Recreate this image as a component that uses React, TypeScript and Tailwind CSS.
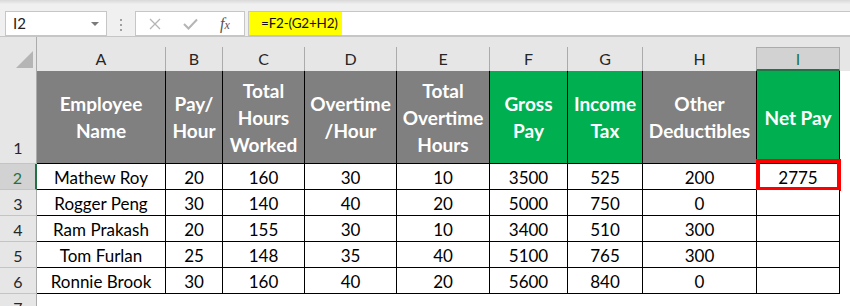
import React from "react";

const COLS = ["A", "B", "C", "D", "E", "F", "G", "H", "I"];
const WIDTHS = [129, 57, 82, 92, 93, 78, 75, 114, 83];

const HEAD: { t: string; g: boolean }[] = [
  { t: "Employee\nName", g: false },
  { t: "Pay/\nHour", g: false },
  { t: "Total\nHours\nWorked", g: false },
  { t: "Overtime\n/Hour", g: false },
  { t: "Total\nOvertime\nHours", g: false },
  { t: "Gross\nPay", g: true },
  { t: "Income\nTax", g: true },
  { t: "Other\nDeductibles", g: false },
  { t: "Net Pay", g: true },
];

const DATA: string[][] = [
  ["Mathew Roy", "20", "160", "30", "10", "3500", "525", "200", "2775"],
  ["Rogger Peng", "30", "140", "40", "20", "5000", "750", "0", ""],
  ["Ram Prakash", "20", "155", "30", "10", "3400", "510", "300", ""],
  ["Tom Furlan", "25", "148", "35", "40", "5100", "765", "300", ""],
  ["Ronnie Brook", "30", "160", "40", "20", "5600", "840", "0", ""],
];

const font = { fontFamily: "Lato, 'Open Sans', sans-serif" };

export default function App() {
  return (
    <div className="w-[850px] h-[306px] overflow-hidden bg-white" style={font}>
      {/* Formula bar */}
      <div className="h-[36px] bg-gradient-to-b from-[#d9d9d9] via-[#f0f0f0] via-[12%] to-[#f0f0f0] flex items-start pt-[11px]">
        <div className="ml-[5px] w-[102px] h-[25px] bg-white border border-[#c6c6c6] flex items-center pl-[7px] pr-[7px] justify-between">
          <span className="text-[15px] text-[#222]">I2</span>
          <span className="w-0 h-0 border-l-[4px] border-r-[4px] border-t-[4px] border-l-transparent border-r-transparent border-t-[#7a7a7a]" />
        </div>
        <div className="ml-[13px] mt-[8px] flex flex-col gap-[3px]">
          <span className="w-[2px] h-[2px] bg-[#a0a0a0]" />
          <span className="w-[2px] h-[2px] bg-[#a0a0a0]" />
          <span className="w-[2px] h-[2px] bg-[#a0a0a0]" />
        </div>
        <div className="ml-[13px] w-[110px] h-[25px] bg-white border border-[#c6c6c6] flex items-center">
          <svg width="12" height="12" viewBox="0 0 12 12" className="ml-[13px]">
            <path d="M1 1 L11 11 M11 1 L1 11" stroke="#b5b5b5" strokeWidth="1.3" fill="none" />
          </svg>
          <svg width="15" height="12" viewBox="0 0 15 12" className="ml-[22px]">
            <path d="M1 6 L5.5 10.5 L14 1.5" stroke="#b5b5b5" strokeWidth="2" fill="none" />
          </svg>
          <span className="ml-[22px] italic text-[#555] text-[16px] leading-none" style={{ fontFamily: "'Liberation Serif', serif" }}>
            f<span className="text-[12px]">x</span>
          </span>
        </div>
        <div className="ml-[3px] flex-1 h-[25px] bg-white border border-[#c6c6c6] border-r-0 flex items-stretch">
          <div className="w-[93px] bg-[#ffff00] flex items-center pl-[12px] text-[13.5px] tracking-[-0.2px] text-[#111] whitespace-nowrap">=F2-(G2+H2)</div>
        </div>
      </div>

      {/* Sheet grid */}
      <div className="bg-[#e6e6e6] border-t border-[#c6c6c6]">
        {/* Column header row */}
        <div className="flex h-[34px]">
          <div className="w-[37px] shrink-0 border-r border-[#ababab] relative">
            <svg width="18" height="17" viewBox="0 0 18 17" className="absolute left-[16px] top-[14px]">
              <path d="M17 0 L17 17 L0 17 Z" fill="#b5b5b5" />
            </svg>
          </div>
          {COLS.map((c, i) => (
            <div key={c} className="shrink-0 flex flex-col justify-end" style={{ width: WIDTHS[i] }}>
              {c === "I" ? (
                <div className="h-[24px] bg-[#d2d2d2] border-t border-l border-r border-[#ababab] border-b-2 border-b-[#217346] -ml-px flex items-center justify-center text-[16px] text-[#217346]" style={{ width: WIDTHS[i] + 1 }}>
                  {c}
                </div>
              ) : (
                <div className="h-[24px] border-r border-[#ababab] flex items-center justify-center text-[16px] text-[#262626]">{c}</div>
              )}
            </div>
          ))}
          <div className="flex-1" />
        </div>

        {/* Row 1 */}
        <div className="flex h-[93px]">
          <div className="w-[37px] shrink-0 border-r border-b border-[#ababab] border-b-[#c4c4c4] flex items-end justify-center pb-[3px] text-[16px] text-[#262626]">1</div>
          {HEAD.map((h, i) => (
            <div
              key={i}
              className={`shrink-0 border-r border-b border-black flex items-center justify-center text-center whitespace-pre-line font-bold text-white text-[19px] leading-[27px] ${h.g ? "bg-[#00b050]" : "bg-[#808080]"}`}
              style={{ width: WIDTHS[i] }}
            >
              {h.t}
            </div>
          ))}
          <div className="flex-1 bg-white" />
        </div>

        {/* Data rows */}
        {DATA.map((row, r) => (
          <div key={r} className="flex h-[26px]">
            {r === 0 ? (
              <div className="w-[37px] shrink-0 bg-[#d2d2d2] border-b border-[#c4c4c4] border-r-2 border-r-[#217346] flex items-center justify-center pt-[2px] text-[16px] text-[#217346]">2</div>
            ) : (
              <div className="w-[37px] shrink-0 border-r border-b border-[#ababab] border-b-[#c4c4c4] flex items-center justify-center pt-[2px] text-[16px] text-[#262626]">{r + 2}</div>
            )}
            {row.map((v, i) => (
              <div
                key={i}
                className="shrink-0 bg-white border-r border-b border-black flex items-center justify-center pt-[2px] text-[17px] text-black relative"
                style={{ width: WIDTHS[i] }}
              >
                {v}
                {r === 0 && i === 8 && (
                  <div className="absolute left-[-1px] top-[-5px] w-[85px] h-[32px] border-4 border-[#ff0000]" />
                )}
              </div>
            ))}
            <div className="flex-1 bg-white" />
          </div>
        ))}

        {/* Row 7 */}
        <div className="flex h-[26px]">
          <div className="w-[37px] shrink-0 border-r border-b border-[#ababab] border-b-[#c4c4c4] flex items-center justify-center pt-[2px] text-[16px] text-[#262626]">7</div>
          <div className="flex-1 bg-white" />
        </div>
      </div>
    </div>
  );
}
